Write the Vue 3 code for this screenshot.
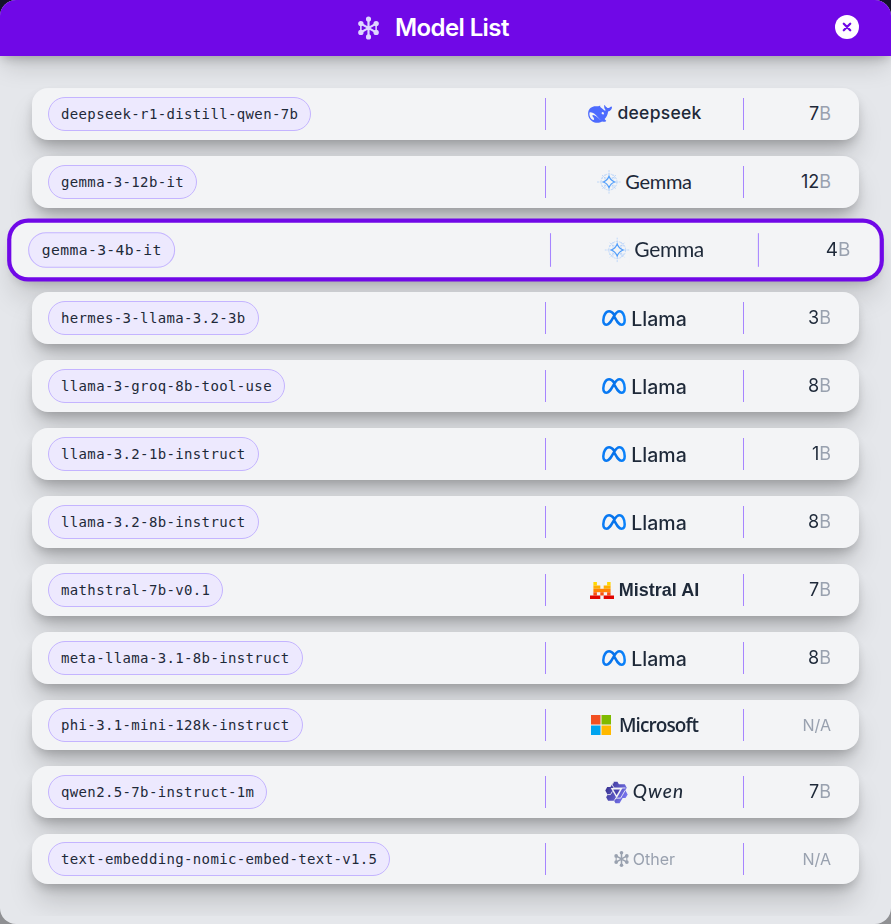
<script setup>
const models = [
  { name: 'deepseek-r1-distill-qwen-7b', provider: 'deepseek', size: 7 },
  { name: 'gemma-3-12b-it', provider: 'gemma', size: 12 },
  { name: 'gemma-3-4b-it', provider: 'gemma', size: 4, selected: true },
  { name: 'hermes-3-llama-3.2-3b', provider: 'llama', size: 3 },
  { name: 'llama-3-groq-8b-tool-use', provider: 'llama', size: 8 },
  { name: 'llama-3.2-1b-instruct', provider: 'llama', size: 1 },
  { name: 'llama-3.2-8b-instruct', provider: 'llama', size: 8 },
  { name: 'mathstral-7b-v0.1', provider: 'mistral', size: 7 },
  { name: 'meta-llama-3.1-8b-instruct', provider: 'llama', size: 8 },
  { name: 'phi-3.1-mini-128k-instruct', provider: 'microsoft', size: null },
  { name: 'qwen2.5-7b-instruct-1m', provider: 'qwen', size: 7 },
  { name: 'text-embedding-nomic-embed-text-v1.5', provider: 'other', size: null },
]
const labels = {
  deepseek: 'deepseek',
  gemma: 'Gemma',
  llama: 'Llama',
  mistral: 'Mistral AI',
  microsoft: 'Microsoft',
  qwen: 'Qwen',
  other: 'Other',
}
</script>

<template>
  <div class="backdrop">
    <section class="dialog">
      <header class="header">
        <svg class="hub" viewBox="0 0 22 24">
          <path d="M11 3v18M3 7.4l16 9.2M19 7.4L3 16.6" fill="none" stroke="currentColor" stroke-width="2.3" />
          <path d="M3 7.4v9.2M19 7.4v9.2" fill="none" stroke="currentColor" stroke-width="1.6" />
          <g fill="currentColor"><circle cx="11" cy="2.7" r="2.7" /><circle cx="11" cy="21.3" r="2.7" /><circle cx="3" cy="7.4" r="2.8" /><circle cx="19" cy="7.4" r="2.8" /><circle cx="3" cy="16.6" r="2.8" /><circle cx="19" cy="16.6" r="2.8" /></g>
        </svg>
        <h1>Model List</h1>
        <button class="close" aria-label="Close">
          <svg viewBox="0 0 24 24"><path d="M8.8 8.8l6.4 6.4M15.2 8.8l-6.4 6.4" stroke="#7008e7" stroke-width="2.3" stroke-linecap="round" /></svg>
        </button>
      </header>

      <ul class="list">
        <li v-for="m in models" :key="m.name" class="row" :class="{ selected: m.selected, compact: m.size === null }">
          <div class="name"><span class="pill">{{ m.name }}</span></div>
          <div class="provider" :class="m.provider">
            <svg v-if="m.provider === 'deepseek'" class="logo" viewBox="0 0 24 18">
              <path fill="#4d6bfe" d="M23.7 1.7c-.6-.3-1 .2-1.4.4-.8.9-1.8 1-3 .9-.5-.8-1.800-1.100-2.300-2.400-.5-.7-.8-.6-.8.1-.1 1.500.2 3.100 1.500 4.200-.4.9-.9.7-1.500.4-1.400-1-2.600-2.400-4.200-3.500.6-.7.7-1.100-.8-.9-.9.1-1.700.5-2.700.4C4.300.9 1.100 3.200.3 6.800c-.8 3.600.8 7.200 3.800 9.400 3.300 2.400 7.200 1.900 10.100.3 1.200.5 2.700.3 3.500-.1.700-.4.600-.7.300-.900-.900-.500-.900-.900-1.400-1.400 1.900-2.200 3.200-4.300 3.500-7.700 2.200-.300 3.800-1.900 3.900-4.200 0-.300 0-.400-.3-.5zM12.200 14.700c-3-2.400-4.700-4.700-7.100-4.700-1 0-.8.9-.4 1.400.5.800 1.300 1.400 1.400 2.300.2 1-.5 1.600-1.500 1-2.600-1.600-3.700-5.100-3-7.200.5-.7 1.500-.2 2.300.1 3.200 1.100 4.900 3.700 7.100 5.800 1 .9 1.600 1 1.200 1.300zm3.500-5.500c-.500.4-1.500.1-1.900-.4-.5-.700-.2-1.700.7-1.900 1.200-.2 1.900 1.400 1.200 2.300z" />
            </svg>
            <svg v-else-if="m.provider === 'gemma'" class="logo" viewBox="0 0 24 24" fill="none">
              <g stroke="#a6cafb" stroke-width=".75" opacity=".85">
                <path d="M12 0v24M0 12h24M5 5l14 14M19 5L5 19" stroke-dasharray="2 .7" />
                <circle cx="12" cy="12" r="8" stroke-dasharray="2 .8" /><path d="M4.500 8h15M4.500 16h15M8 4.500v15M16 4.500v15" stroke-dasharray="1.500 1" />
              </g>
              <path d="M12 6.300c.9 2.500 3.200 4.800 5.700 5.700-2.500.9-4.800 3.200-5.700 5.700-.9-2.500-3.200-4.800-5.700-5.700 2.500-.9 4.800-3.200 5.700-5.700z" fill="#f3f4f6" stroke="#4f9dfb" stroke-width="1.100" />
            </svg>
            <svg v-else-if="m.provider === 'llama'" class="logo" viewBox="0 0 24 16" fill="none">
              <defs><linearGradient id="meta" x1="0" x2="1"><stop offset="0" stop-color="#0a7cf6" /><stop offset=".5" stop-color="#0672ea" /><stop offset="1" stop-color="#0a82fb" /></linearGradient></defs>
              <path d="M12 4.500C10.200 2 8.800 1.300 7.100 1.300 3.900 1.300 1.300 5.600 1.300 10.200c0 2.800 1.200 4.500 3.400 4.500 2.400 0 3.900-2.300 7.300-8.500 1.900-3.400 3.400-4.900 5.500-4.900 3 0 5.200 4.200 5.200 8.900 0 2.800-1.200 4.500-3.300 4.500-2.300 0-3.800-1.800-7.400-8.500" stroke="url(#meta)" stroke-width="2.500" />
            </svg>
            <svg v-else-if="m.provider === 'mistral'" class="logo" viewBox="0 0 24 17">
              <path fill="#ffd800" d="M3.400 0h3.500v3.400H3.400zM17.100 0h3.500v3.400h-3.500z" />
              <path fill="#ffaf00" d="M3.400 3.400h6.900v3.400H3.400zM13.700 3.400h6.900v3.400h-6.900z" />
              <path fill="#ff8205" d="M3.400 6.800h17.200v3.400H3.400z" />
              <path fill="#fa500f" d="M3.400 10.200h3.500v3.400H3.400zM10.300 10.200h3.400v3.400h-3.400zM17.100 10.200h3.500v3.400h-3.500z" />
              <path fill="#e10500" d="M0 13.600h10.300V17H0zM13.700 13.600H24V17H13.700z" />
            </svg>
            <svg v-else-if="m.provider === 'microsoft'" class="logo" viewBox="0 0 20 20">
              <path fill="#f25022" d="M0 0h9.500v9.500H0z" /><path fill="#7fba00" d="M10.500 0H20v9.500h-9.500z" />
              <path fill="#00a4ef" d="M0 10.500h9.500V20H0z" /><path fill="#ffb900" d="M10.500 10.500H20V20h-9.500z" />
            </svg>
            <svg v-else-if="m.provider === 'qwen'" class="logo" viewBox="0 0 24 24">
              <defs><linearGradient id="qwen" x1="0" x2="1" y1="0" y2=".5"><stop offset="0" stop-color="#302a83" /><stop offset="1" stop-color="#7774ee" /></linearGradient></defs>
              <path fill="url(#qwen)" d="M9 .8h4l1.500 2.700h6.200l2 3.500-1.500 2.700 2.500 4.300-2.300 3.700h-3l-3.200 5.500H11l-1.500-2.700H3.200l-2-3.500 1.500-2.700L.3 9.900l2-3.600h3.400z" />
              <path fill="#f3f4f6" d="M6 7.300h12.300L12.200 17.900z" />
              <path fill="none" stroke="#f3f4f6" stroke-width=".9" d="M9 .8L7.500 4l2 3.300h11.900M2.500 14.200h3.200l2-3.300M9.600 20.500l2-3.200M21 9.800l-2.900 5-1.800 3.100H11" />
              <path fill="#4a43ad" d="M8.600 8.900h7l-3.500 6z" />
            </svg>
            <svg v-else class="logo" viewBox="0 0 22 24">
              <path d="M11 3v18M3 7.400l16 9.200M19 7.400L3 16.600" fill="none" stroke="currentColor" stroke-width="2.300" />
              <path d="M3 7.400v9.200M19 7.400v9.200" fill="none" stroke="currentColor" stroke-width="1.600" />
              <g fill="currentColor"><circle cx="11" cy="2.700" r="2.700" /><circle cx="11" cy="21.300" r="2.700" /><circle cx="3" cy="7.400" r="2.800" /><circle cx="19" cy="7.400" r="2.800" /><circle cx="3" cy="16.600" r="2.800" /><circle cx="19" cy="16.600" r="2.800" /></g>
            </svg>
            <span class="label">{{ labels[m.provider] }}</span>
          </div>
          <div class="size">
            <template v-if="m.size !== null">{{ m.size }}<span class="unit">B</span></template>
            <span v-else class="na">N/A</span>
          </div>
        </li>
      </ul>
    </section>
  </div>
</template>

<style>
body { margin: 0; }
</style>

<style scoped>
* { box-sizing: border-box; }
.backdrop {
  height: 924px;
  background: linear-gradient(#14122b 0, #14122b 50%, #8f9093 50%);
  overflow: hidden;
  font-family: Inter, sans-serif;
  color: #1e2939;
}
.dialog {
  height: 924px;
  border-radius: 16px;
  background: #e5e7eb;
  overflow: hidden;
  display: flex;
  flex-direction: column;
}
.header {
  position: relative;
  z-index: 1;
  flex: none;
  height: 56px;
  display: flex;
  align-items: center;
  padding: 0 32px 0 358px;
  background: #7008e7;
  color: #fff;
  box-shadow: 0 14px 24px -4px rgba(0, 0, 0, .15), 0 4px 10px -2px rgba(0, 0, 0, .22);
}
.hub { width: 21px; height: 24px; color: #ddd6ff; }
h1 { margin: 0 0 0 16px; font-size: 24px; line-height: 32px; font-weight: 600; letter-spacing: -.6px; white-space: nowrap; }
.close { margin-left: auto; width: 24px; height: 24px; padding: 0; border: 0; border-radius: 50%; background: #fff; position: relative; top: -1px; }
.close svg { display: block; width: 24px; height: 24px; }
.list {
  position: relative;
  margin: 0;
  padding: 32px 32px 0;
  list-style: none;
  display: flex;
  flex-direction: column;
  gap: 16px;
  height: 860px;
  overflow: hidden;
}
.row {
  position: relative;
  flex: none;
  height: 52px;
  display: grid;
  grid-template-columns: 1fr 199px 99px;
  align-items: center;
  padding: 0 16px;
  border-radius: 16px;
  background: #f3f4f6;
  box-shadow: 0 20px 28px -4px rgba(0, 0, 0, .18), 0 6px 12px -3px rgba(0, 0, 0, .24);
}
.row.compact { height: 50px; }
.row.selected {
  transform: scale(1.05);
  box-shadow: 0 0 0 4px #7008e7, 0 20px 28px -4px rgba(0, 0, 0, .18), 0 6px 12px -3px rgba(0, 0, 0, .24);
}
.name { display: flex; }
.pill {
  height: 34px;
  padding: 0 12px;
  border: 1px solid #c4b4ff;
  border-radius: 17px;
  background: #ede9fe;
  font: 14px/33px "DejaVu Sans Mono", monospace;
  letter-spacing: .36px;
  white-space: nowrap;
}
.provider {
  height: 32px;
  display: flex;
  align-items: center;
  justify-content: center;
  border-left: 1px solid #a684ff;
  border-right: 1px solid #a684ff;
}
.logo { display: block; flex: none; width: 24px; }
.label { white-space: nowrap; line-height: 24px; }
.deepseek .logo { height: 18px; }
.deepseek .label { margin: -2px 0 0 6px; font: 500 17.5px/24px Inter, sans-serif; letter-spacing: .25px; }
.gemma .logo { height: 24px; }
.gemma .label { margin: -3px 0 0 4px; font: 400 20px/24px Lato, sans-serif; letter-spacing: -.3px; }
.llama .logo { height: 16px; }
.llama .label { margin: 1px 0 0 5px; font: 500 19.500px/24px Inter, sans-serif; }
.mistral .logo { height: 17px; }
.mistral .label { margin: 0 0 0 5px; font: 700 18px/24px "Liberation Sans", sans-serif; }
.microsoft .logo { width: 20px; height: 20px; }
.microsoft .label { margin: 0 0 0 8px; font: 600 19px/24px "Open Sans", sans-serif; letter-spacing: -.9px; }
.qwen .logo { width: 23px; height: 23px; }
.qwen .label { margin: -2px 0 0 5px; font: italic 500 19px/24px Lato, sans-serif; letter-spacing: 1.1px; }
.other { color: #99a1af; }
.other .logo { width: 15px; height: 16px; }
.other .label { margin-left: 4px; font-size: 16px; }
.size { padding-right: 12px; text-align: right; font-size: 18px; line-height: 28px; }
.unit, .na { color: #99a1af; }
.na { font-size: 16px; }
</style>
